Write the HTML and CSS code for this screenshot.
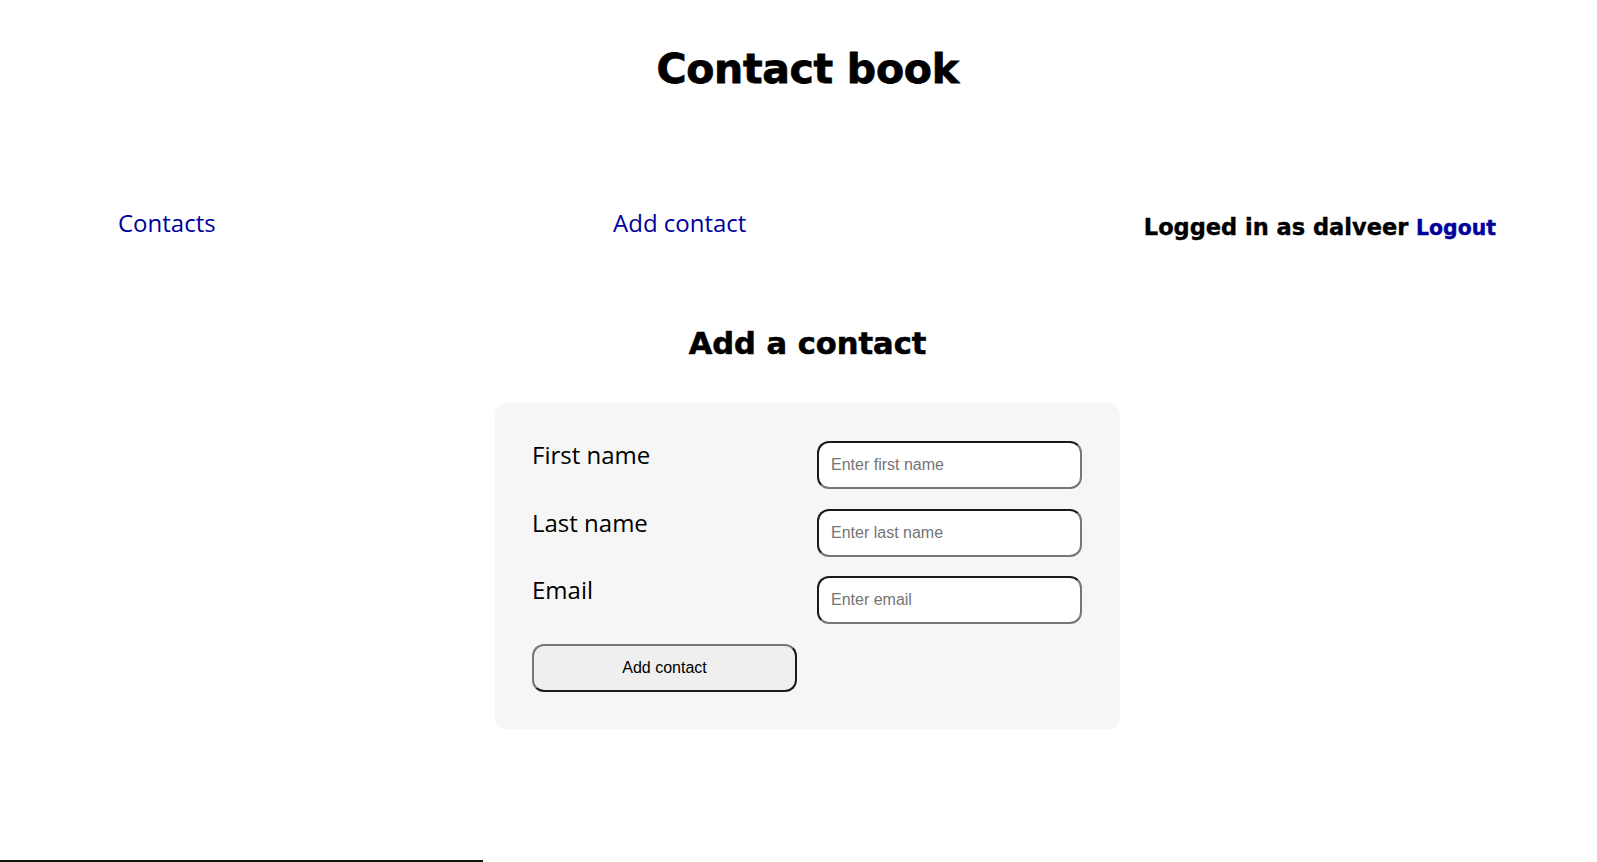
FILE: index.html
```html
<!DOCTYPE html>
<html lang="en">
<head>
<meta charset="utf-8">
<title>Contact book</title>
<link rel="stylesheet" href="styles.css">
</head>
<body>
<div class="page">
  <h1 class="title">Contact book</h1>
  <nav class="nav">
    <a class="nav-link" href="#">Contacts</a>
    <a class="nav-link" href="#">Add contact</a>
    <div class="user">Logged in as dalveer <a class="logout" href="#">Logout</a></div>
  </nav>
  <h2 class="subtitle">Add a contact</h2>
  <form class="card">
    <label class="label" for="fn">First name</label>
    <input class="field" id="fn" type="text" placeholder="Enter first name">
    <label class="label" for="ln">Last name</label>
    <input class="field" id="ln" type="text" placeholder="Enter last name">
    <label class="label" for="em">Email</label>
    <input class="field" id="em" type="email" placeholder="Enter email">
    <button class="submit" type="button">Add contact</button>
  </form>
</div>
<div class="footer-line"></div>
</body>
</html>
```
FILE: styles.css
```css
html, body {
  margin: 0;
  padding: 0;
  background: #ffffff;
}
body {
  font-family: "Open Sans", "Liberation Sans", sans-serif;
  color: #000;
  height: 862px;
  overflow: hidden;
}
.page {
  padding-left: 18px;
}
.title {
  margin: 44px 0 0;
  font-family: "DejaVu Sans", "Liberation Sans", sans-serif;
  font-size: 41px;
  line-height: 50px;
  font-weight: 700;
  text-align: center;
  letter-spacing: -0.3px;
  -webkit-text-stroke: 0.8px #000;
}
.nav {
  margin-top: 114px;
  display: flex;
  justify-content: space-between;
  align-items: flex-start;
  padding: 0 101px 0 100px;
}
.nav-link {
  font-size: 24px;
  line-height: 30px;
  color: #00009c;
  text-decoration: none;
}
.user {
  font-family: "DejaVu Sans", "Liberation Sans", sans-serif;
  font-size: 22.5px;
  line-height: 30px;
  font-weight: 700;
  margin-top: 4px;
  -webkit-text-stroke: 0.4px #000;
}
.logout {
  font-size: 20.4px;
  color: #00009c;
  text-decoration: none;
  -webkit-text-stroke: 0.4px #00009c;
}
.subtitle {
  margin: 81px 0 0;
  font-family: "DejaVu Sans", "Liberation Sans", sans-serif;
  font-size: 30.5px;
  line-height: 40px;
  font-weight: 700;
  text-align: center;
  -webkit-text-stroke: 0.6px #000;
}
.card {
  width: 551px;
  margin: 39px auto 0;
  padding: 38px 37px 37px 37px;
  background: #f6f6f6;
  border-radius: 12px;
  display: grid;
  grid-template-columns: 265px 265px;
  grid-auto-rows: 48px;
  column-gap: 20px;
  row-gap: 19.5px;
}
.label {
  font-size: 24px;
  line-height: 28px;
  align-self: start;
}
.field {
  box-sizing: border-box;
  width: 265px;
  height: 48px;
  margin: 0;
  padding: 0 12px;
  border: 2px solid;
  border-color: #1a1a1a #767676 #767676 #1a1a1a;
  border-radius: 12px;
  background: #fff;
  font-family: "Liberation Sans", Arial, sans-serif;
  font-size: 16px;
  color: #000;
}
.field::placeholder {
  color: #757575;
}
.submit {
  box-sizing: border-box;
  width: 265px;
  height: 48px;
  margin: 0;
  border: 2px solid;
  border-color: #767676 #1a1a1a #1a1a1a #767676;
  border-radius: 12px;
  background: #efefef;
  font-family: "Liberation Sans", Arial, sans-serif;
  font-size: 16px;
  color: #000;
}
.footer-line {
  margin-top: 131px;
  width: 483px;
  height: 2px;
  background: #111;
}
```
